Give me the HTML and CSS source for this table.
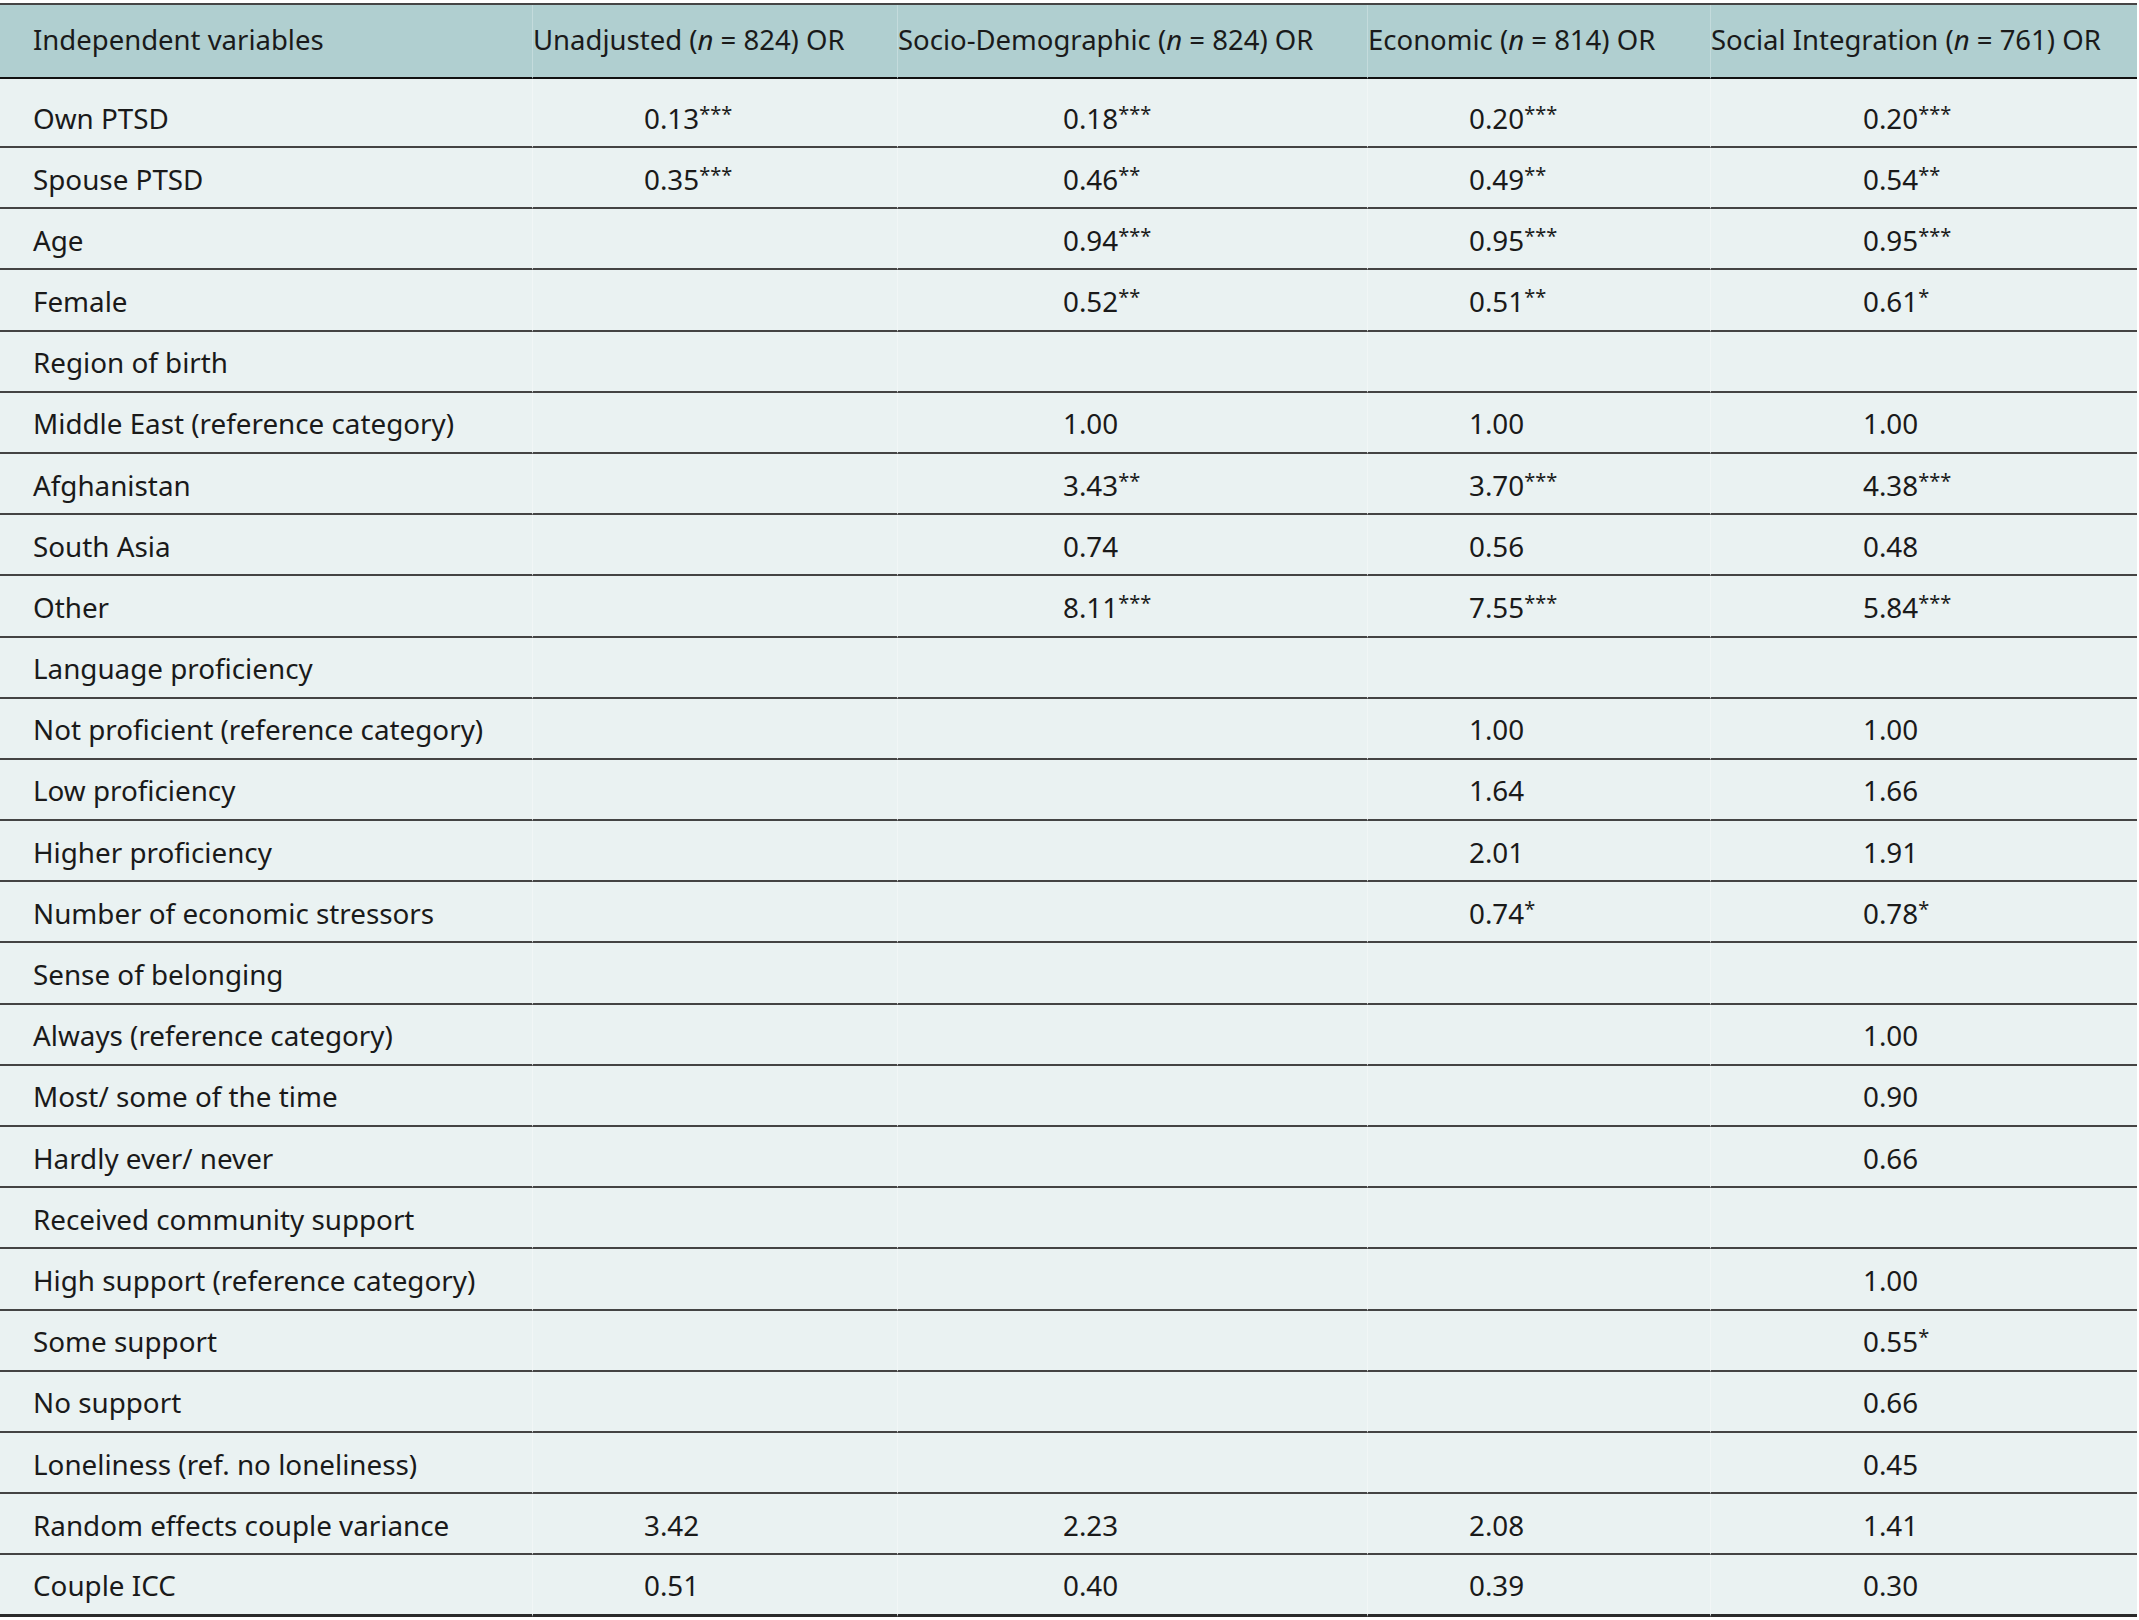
FILE: index.html
```html
<!DOCTYPE html>
<html lang="en">
<head>
<meta charset="utf-8">
<title>Table</title>
<link rel="stylesheet" href="styles.css">
</head>
<body>
<table class="tbl">
  <colgroup>
    <col class="w1"><col class="w2"><col class="w3"><col class="w4"><col class="w5">
  </colgroup>
  <thead>
    <tr>
      <th class="h1">Independent variables</th>
      <th class="h2">Unadjusted (<i>n</i> = 824) OR</th>
      <th class="h3">Socio-Demographic (<i>n</i> = 824) OR</th>
      <th class="h4">Economic (<i>n</i> = 814) OR</th>
      <th class="h5">Social Integration (<i>n</i> = 761) OR</th>
    </tr>
  </thead>
  <tbody>
    <tr class="first"><td>Own PTSD</td><td class="c2">0.13<sup>***</sup></td><td class="c3">0.18<sup>***</sup></td><td class="c4">0.20<sup>***</sup></td><td class="c5">0.20<sup>***</sup></td></tr>
    <tr><td>Spouse PTSD</td><td class="c2">0.35<sup>***</sup></td><td class="c3">0.46<sup>**</sup></td><td class="c4">0.49<sup>**</sup></td><td class="c5">0.54<sup>**</sup></td></tr>
    <tr><td>Age</td><td class="c2"></td><td class="c3">0.94<sup>***</sup></td><td class="c4">0.95<sup>***</sup></td><td class="c5">0.95<sup>***</sup></td></tr>
    <tr><td>Female</td><td class="c2"></td><td class="c3">0.52<sup>**</sup></td><td class="c4">0.51<sup>**</sup></td><td class="c5">0.61<sup>*</sup></td></tr>
    <tr><td>Region of birth</td><td class="c2"></td><td class="c3"></td><td class="c4"></td><td class="c5"></td></tr>
    <tr><td>Middle East (reference category)</td><td class="c2"></td><td class="c3">1.00</td><td class="c4">1.00</td><td class="c5">1.00</td></tr>
    <tr><td>Afghanistan</td><td class="c2"></td><td class="c3">3.43<sup>**</sup></td><td class="c4">3.70<sup>***</sup></td><td class="c5">4.38<sup>***</sup></td></tr>
    <tr><td>South Asia</td><td class="c2"></td><td class="c3">0.74</td><td class="c4">0.56</td><td class="c5">0.48</td></tr>
    <tr><td>Other</td><td class="c2"></td><td class="c3">8.11<sup>***</sup></td><td class="c4">7.55<sup>***</sup></td><td class="c5">5.84<sup>***</sup></td></tr>
    <tr><td>Language proficiency</td><td class="c2"></td><td class="c3"></td><td class="c4"></td><td class="c5"></td></tr>
    <tr><td>Not proficient (reference category)</td><td class="c2"></td><td class="c3"></td><td class="c4">1.00</td><td class="c5">1.00</td></tr>
    <tr><td>Low proficiency</td><td class="c2"></td><td class="c3"></td><td class="c4">1.64</td><td class="c5">1.66</td></tr>
    <tr><td>Higher proficiency</td><td class="c2"></td><td class="c3"></td><td class="c4">2.01</td><td class="c5">1.91</td></tr>
    <tr><td>Number of economic stressors</td><td class="c2"></td><td class="c3"></td><td class="c4">0.74<sup>*</sup></td><td class="c5">0.78<sup>*</sup></td></tr>
    <tr><td>Sense of belonging</td><td class="c2"></td><td class="c3"></td><td class="c4"></td><td class="c5"></td></tr>
    <tr><td>Always (reference category)</td><td class="c2"></td><td class="c3"></td><td class="c4"></td><td class="c5">1.00</td></tr>
    <tr><td>Most/ some of the time</td><td class="c2"></td><td class="c3"></td><td class="c4"></td><td class="c5">0.90</td></tr>
    <tr><td>Hardly ever/ never</td><td class="c2"></td><td class="c3"></td><td class="c4"></td><td class="c5">0.66</td></tr>
    <tr><td>Received community support</td><td class="c2"></td><td class="c3"></td><td class="c4"></td><td class="c5"></td></tr>
    <tr><td>High support (reference category)</td><td class="c2"></td><td class="c3"></td><td class="c4"></td><td class="c5">1.00</td></tr>
    <tr><td>Some support</td><td class="c2"></td><td class="c3"></td><td class="c4"></td><td class="c5">0.55<sup>*</sup></td></tr>
    <tr><td>No support</td><td class="c2"></td><td class="c3"></td><td class="c4"></td><td class="c5">0.66</td></tr>
    <tr><td>Loneliness (ref. no loneliness)</td><td class="c2"></td><td class="c3"></td><td class="c4"></td><td class="c5">0.45</td></tr>
    <tr><td>Random effects couple variance</td><td class="c2">3.42</td><td class="c3">2.23</td><td class="c4">2.08</td><td class="c5">1.41</td></tr>
    <tr class="last"><td>Couple ICC</td><td class="c2">0.51</td><td class="c3">0.40</td><td class="c4">0.39</td><td class="c5">0.30</td></tr>
  </tbody>
</table>
</body>
</html>
```

FILE: styles.css
```css
html, body {
  margin: 0;
  padding: 0;
  background: #ffffff;
}

body {
  padding-top: 3px;
  font-family: "Noto Sans", "Open Sans", sans-serif;
  color: #1a1a1a;
}

.tbl {
  width: 2137px;
  border-collapse: separate;
  border-spacing: 0;
  table-layout: fixed;
  border-top: 2px solid #454545;
}

.w1 { width: 532px; }
.w2 { width: 365px; }
.w3 { width: 470px; }
.w4 { width: 343px; }
.w5 { width: 427px; }

th {
  background: #b0cfd0;
  font-weight: 400;
  font-size: 27.5px;
  text-align: left;
  height: 74px;
  padding: 0 0 3px 0;
  box-sizing: border-box;
  border-bottom: 2px solid #111111;
  white-space: nowrap;
  vertical-align: middle;
  border-left: 1px solid rgba(255, 255, 255, 0.25);
}

th.h1 {
  padding-left: 33px;
  border-left: none;
}

td {
  background: #eaf2f2;
  font-size: 27.8px;
  height: 61.2px;
  box-sizing: border-box;
  padding: 2px 0 0 0;
  border-bottom: 2px solid #444444;
  border-left: 1px solid rgba(255, 255, 255, 0.35);
  white-space: nowrap;
  vertical-align: middle;
}

td:first-child {
  padding-left: 33px;
  border-left: none;
}

tr.first td {
  height: 69px;
  padding-top: 11px;
}

tr.last td {
  border-bottom: 3px solid #2a2a2a;
}

td.c2 { padding-left: 111px; }
td.c3 { padding-left: 165px; }
td.c4 { padding-left: 101px; }
td.c5 { padding-left: 152px; }

sup {
  font-size: 0.72em;
  line-height: 0;
  vertical-align: 0.4em;
}
```
